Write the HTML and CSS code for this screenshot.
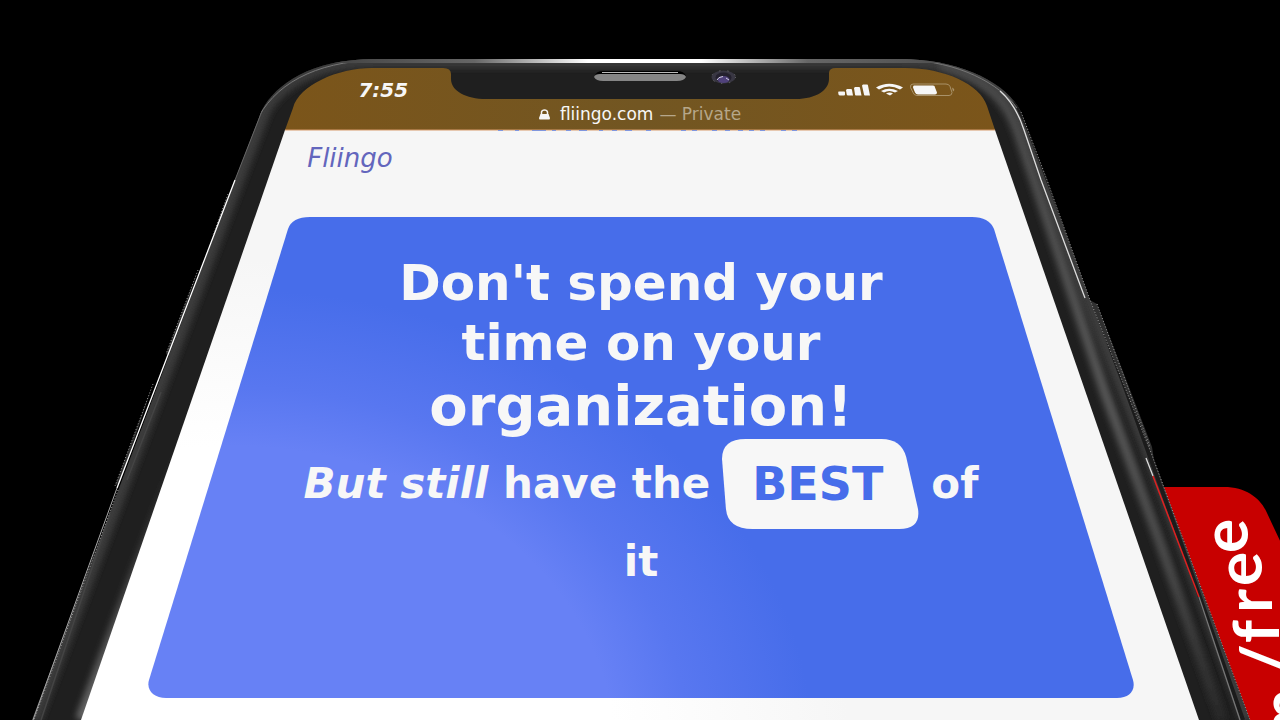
FILE: index.html
```html
<!DOCTYPE html>
<html lang="en">
<head>
<meta charset="utf-8">
<meta name="viewport" content="width=device-width, initial-scale=1">
<title>Fliingo</title>
<link rel="stylesheet" href="styles.css">
</head>
<body>
<div class="scene">
  <svg class="backdrop" viewBox="0 0 1280 720" preserveAspectRatio="none" aria-hidden="true">
    <defs>
      <linearGradient id="rim" x1="262" x2="1020" y1="0" y2="0" gradientUnits="userSpaceOnUse">
        <stop offset="0" stop-color="#333"/><stop offset=".28" stop-color="#666"/><stop offset=".43" stop-color="#fff"/><stop offset=".58" stop-color="#fff"/><stop offset=".72" stop-color="#666"/><stop offset="1" stop-color="#444"/>
      </linearGradient>
      <linearGradient id="shine" x1="0" x2="0" y1="90" y2="720" gradientUnits="userSpaceOnUse">
        <stop offset="0" stop-color="#4a4a4a"/><stop offset=".5" stop-color="#575757"/><stop offset=".75" stop-color="#4a4a4a"/><stop offset="1" stop-color="#292929"/>
      </linearGradient>
      <linearGradient id="lowshine" x1="0" x2="0" y1="440" y2="720" gradientUnits="userSpaceOnUse">
        <stop offset="0" stop-color="#666" stop-opacity="0"/><stop offset="1" stop-color="#666"/>
      </linearGradient>
      <linearGradient id="bar" x1="285" x2="995" y1="0" y2="0" gradientUnits="userSpaceOnUse">
        <stop offset="0" stop-color="#7b551a"/><stop offset=".5" stop-color="#725622"/><stop offset="1" stop-color="#7b551a"/>
      </linearGradient>
      <radialGradient id="glare" cx="0" cy="0" r="1" gradientUnits="userSpaceOnUse" gradientTransform="translate(230 750) scale(620 490)">
        <stop offset=".62" stop-color="#fff"/><stop offset="1" stop-color="#f6f6f6"/>
      </radialGradient>
      <filter id="soft" x="-20%" y="-20%" width="140%" height="140%"><feGaussianBlur stdDeviation="3"/></filter>
      <clipPath id="body"><path d="M32 720 235 180 262 110C276 84 311 59 375 59H900C958 59 1007 82 1021 112L1047 180 1090 300 1152 455 1250 720Z"/></clipPath>
    </defs>
    <path fill="#c80000" d="M1140 487H1224C1247 487 1261 499 1267 513L1290 562V720H1140Z"/>
    <path fill="#303030" d="M1084 297 1097 304 1152 447 1154 460ZM228 194 214 234 217 238ZM198 270 166 354 170 356ZM153 384 115 486 120 482Z"/>
    <path fill="#1f1f1f" d="M32 720 235 180 262 110C276 84 311 59 375 59H900C958 59 1007 82 1021 112L1047 180 1090 300 1152 455 1250 720Z"/>
    <g clip-path="url(#body)" fill="none">
      <path stroke="#3a3a3a" stroke-width="18" d="M32 720 235 180 262 110C276 84 311 59 375 59H900C958 59 1007 82 1021 112L1047 180 1090 300 1152 455 1250 720" filter="url(#soft)"/>
      <path stroke="url(#shine)" stroke-width="10" filter="url(#soft)" d="M940 64C990 78 1009 106 1017 130L1034 180 1105 393 1159 540 1222 720"/>
      <path stroke="#1b1b1b" stroke-width="4" d="M1012 94 1029 130 1069 236 1126 390 1187 560 1243 720"/>
      <path stroke="url(#lowshine)" stroke-width="12" filter="url(#soft)" d="M185 440 81 720"/>
      <path stroke="#777" d="M255 124C273 84 315 62 375 60H905C958 61 1000 84 1017 108"/>
      <path stroke="url(#rim)" stroke-width="4" d="M330 61H960"/>
    </g>
    <path fill="none" stroke="#fff" stroke-width="1.3" d="M235 180 166 360 117 488"/>
    <path fill="none" stroke="#666" d="M262 111 235 180"/>
    <path fill="none" stroke="#aaa" d="M117 488 33 720"/>
    <path fill="none" stroke="#444" stroke-width="1.5" d="M161 392 127 480M110 514 41 720"/>
    <path fill="none" stroke="#999" stroke-dasharray="1 2" d="M228 194 213 235M198 270 166 354M153 384 115 486M118 490 34 720M1021 112 1047 180 1090 300 1152 455 1250 720M1097 304 1150 447"/>
    <path fill="none" stroke="#ddd" stroke-width="1.3" d="M1000 91Q1016 105 1024 130L1041 180 1085 298M1146 458 1153 476"/>
    <path fill="none" stroke="#e02020" stroke-width="1.5" d="M1153 476 1199 597"/>
    <path fill="none" stroke="#777" stroke-width="1.3" d="M1199 597 1240 720"/>
    <path fill="url(#glare)" d="M285 130H995L1199 720H81Z"/>
    <path fill="url(#bar)" d="M285 130 293 108C299 85 338 68 372 68H443Q451 68 451 74V79C451 91 466 99 486 99H796C816 99 829 90 829 79V73Q829 68 836 68H905C944 68 980 84 987 106L995 130Z"/>
    <path stroke="#d69a6b" d="M285 130H995"/>
    <path stroke="#8096dd" stroke-width="1.2" d="M498 130.500h5m12 0h4m13 0h14m6 0h4m10 0h5m8 0h8m12 0h4m9 0h5m8 0h7m14 0h5m30 0h5m6 0h5m15 0h5m8 0h5m8 0h5m6 0h5m6 0h5m16 0h5m6 0h5"/>
    <path fill="#000" d="M595 76Q596 71 603 71H677Q684 71 686 76Z"/>
    <path fill="#858585" d="M594 77Q595 74 600 74H680Q685 74 686 77 684 81 677 81H603Q596 81 594 77Z"/>
    <path stroke="#bbb" d="M602 72.500H678"/>
    <ellipse cx="723.500" cy="77" rx="12" ry="6.500" fill="#393743"/>
    <ellipse cx="723.500" cy="77.500" rx="8" ry="5" fill="#24212e"/>
    <ellipse cx="723.500" cy="79.500" rx="6" ry="3.500" fill="#50427b"/>
    <path fill="none" stroke="#d0cce0" d="M717 80Q718 77 723 76.500M726 78L729 80"/>
    <ellipse cx="723.500" cy="77" rx="12" ry="6.500" fill="none" stroke="#777" stroke-dasharray="1 7"/>
    <text class="banner-text" x="1307 1286 1279 1272 1262 1248" y="742 674 643 613 586 553" rotate="-90">m/free</text>
  </svg>

  <header class="status">
    <time class="clock">7:55</time>
    <svg class="indicators" viewBox="0 0 118 14" role="img" aria-label="Signal, Wi-Fi and battery">
      <g fill="#f6f6f6">
        <path d="M1 8.500h5q1 0 1 1v2q0 1-1 1H2q-1 0-1.500-1L.2 9.500Q0 8.500 1 8.500ZM9 6h4q1 0 1 1l1 5.500h-5q-1 0-1.300-1L8 7ZM17 4h4q1 0 1 1l1.500 7.500h-5.500q-1 0-1-1l-1-6.500ZM25 1.500h4q1 0 1 1l2 10h-5q-1 0-1-1L24 2.500Z"/>
        <path d="M38 4.500Q51-3 65 4.500L62 6.500Q51 .5 41 6.500ZM43 8Q51 3.500 60 8L57 9.500Q51 6.500 46 9.500ZM48 10.500Q52 8.500 55 10.500L52 12.500Z"/>
        <path d="M76 2.500H95Q97 2.500 97 4.500L99 9.500Q99 11.500 97 11.500H80Q78 11.500 77 9.500L75 4.500Q75 2.500 76 2.500Z"/>
      </g>
      <path fill="none" stroke="#a99269" d="M75 1H108Q111 1 112 3.500L114 9.500Q114 12.500 111 12.500H79Q76 12.500 75 9.500L72.500 4.500Q72 1 75 1Z"/>
      <path fill="#a99269" d="M114 4.500Q118 6.500 115 8.500Z"/>
    </svg>
  </header>
  <div class="address">
    <svg class="lock" viewBox="0 0 11 11" aria-hidden="true"><path fill="#f6f6f6" d="M1.500 5H9.500L11 9Q11 10.500 10 10.500H1Q0 10.500 0 9Z"/><path fill="none" stroke="#f6f6f6" stroke-width="1.500" d="M2.500 6V3Q3 1 5.500 1T8.500 3V6"/></svg>
    <a class="host" href="#">fliingo.com</a><span class="private">— Private</span>
  </div>

  <main class="page">
    <a class="brand" href="#">Fliingo</a>
    <section class="card">
      <svg class="card-shape" viewBox="148 217 986 481" preserveAspectRatio="none" aria-hidden="true">
        <defs><radialGradient id="blue" cx="0" cy="0" r="1" gradientUnits="userSpaceOnUse" gradientTransform="translate(230 750) scale(620 490)">
          <stop offset=".62" stop-color="#6781f5"/><stop offset=".74" stop-color="#5877f0"/><stop offset=".94" stop-color="#476dea"/>
        </radialGradient></defs>
        <path fill="url(#blue)" d="M310 217H972Q989 217 994 229L1133 680C1136 691 1129 698 1117 698H166C154 698 146 690 149 680L288 229Q292 217 310 217Z"/>
      </svg>
      <h1 class="headline">
        <span class="line">Don't spend your</span>
        <span class="line">time on your</span>
        <span class="line line-near">organization!</span>
      </h1>
      <p class="tagline">
        <span class="row"><span><i>But still</i> have the</span>
          <strong class="badge"><svg class="badge-shape" viewBox="0 0 200 90" preserveAspectRatio="none" aria-hidden="true"><path fill="#f7f7f7" d="M24 0H162Q182 0 187 18L199 70Q202 90 180 90H31Q6 90 4 70L0 20Q0 0 24 0Z"/></svg><span class="best">BEST</span></strong>
          <span>of</span></span>
        <span class="row">it</span>
      </p>
    </section>
  </main>
</div>
</body>
</html>
```
FILE: styles.css
```css
* { box-sizing: border-box; }

body {
  margin: 0;
  background: #000;
  font-family: "DejaVu Sans", sans-serif;
  color: #f7f7f7;
}

a { color: inherit; text-decoration: none; }

.scene {
  position: relative;
  height: 100vh;
  overflow: hidden;
  padding-top: 80px;
}

.backdrop {
  position: absolute;
  inset: 0;
  width: 100%;
  height: 100%;
}

.banner-text {
  font: bold 64px Lato, sans-serif;
  fill: #fff;
}

.status {
  position: relative;
  display: flex;
  align-items: center;
  justify-content: space-between;
  height: 20px;
  padding: 0 25% 0 28%;
}

.clock { font: italic bold 20px "DejaVu Sans", sans-serif; }

.indicators { width: 118px; height: 14px; margin-right: 4px; }

.address {
  position: relative;
  display: flex;
  align-items: center;
  justify-content: center;
  gap: 6px;
  height: 28px;
  font-size: 17px;
}

.lock { width: 11px; height: 11px; margin-right: 4px; }

.private { color: #b6a78a; }

.page { position: relative; }

.brand {
  display: block;
  height: 89px;
  padding: 18px 0 0 24%;
  font-size: 26px;
  line-height: 24px;
  font-style: italic;
  color: #6366bd;
}

.card {
  position: relative;
  margin: 0 146px 0 148px;
  height: 481px;
  padding-top: 36px;
  text-align: center;
}

.card-shape,
.badge-shape {
  position: absolute;
  inset: 0;
  width: 100%;
  height: 100%;
}

.headline {
  position: relative;
  margin: 0;
  font-size: 50px;
  line-height: 60px;
}

.line { display: block; }

.line-near {
  font-size: 56px;
  line-height: 66px;
}

.tagline {
  position: relative;
  margin: 0;
  font-size: 42px;
  font-weight: bold;
}

.row {
  display: flex;
  align-items: center;
  justify-content: center;
  gap: 12px;
  line-height: 66px;
}

.badge {
  position: relative;
  padding: 0 36px 0 30px;
  font-size: 46px;
  line-height: 90px;
  color: #476dea;
}

.best { position: relative; }
```
